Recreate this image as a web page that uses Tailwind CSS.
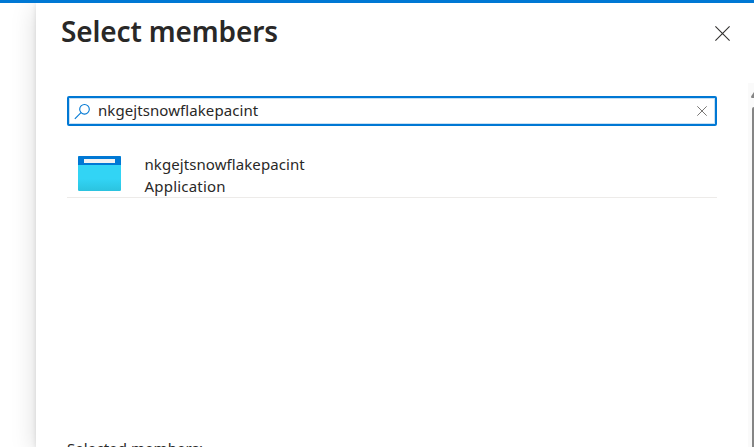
<!DOCTYPE html>
<html lang="en">
<head>
<meta charset="utf-8">
<title>Select members</title>
<script src="https://cdn.jsdelivr.net/npm/@tailwindcss/browser@4"></script>
</head>
<body class="h-[447px] w-[754px] overflow-hidden bg-white font-['Noto_Sans',sans-serif] text-[#292827]">
<div class="flex h-[447px] flex-col overflow-hidden">
  <div class="h-[3px] shrink-0 bg-[#0078d4]"></div>
  <div class="flex min-h-0 flex-1 overflow-hidden">
    <div class="w-9 shrink-0 bg-white"></div>
    <main class="flex min-w-0 flex-1 flex-col bg-white shadow-[0_5px_24px_rgba(0,0,0,0.15),0_1px_5px_rgba(0,0,0,0.1)]">
      <header class="flex h-20 shrink-0 items-start justify-between pl-[25px] pr-[24px]">
        <h1 class="mt-[8px] text-[28px] font-semibold leading-[40px] tracking-[-0.14px]">Select members</h1>
        <button aria-label="Close" class="mt-[23px]"><svg class="block" width="15" height="15" viewBox="0 0 15 15" fill="none" stroke="#323130" stroke-width="1.1"><path d="M.4.4 14.6 14.6M14.6.4.4 14.6"/></svg></button>
      </header>
      <div class="flex min-h-0 flex-1">
        <section class="flex w-[681px] shrink-0 flex-col pl-[31px] pt-[13px] text-[15px]">
          <div class="flex h-[30px] shrink-0 items-center rounded-[2px] border-2 border-[#0078d4] pl-[5px] pr-[8px] shadow-[inset_0_0_0_1px_#c7e0f4]">
            <svg class="shrink-0" width="17" height="17" viewBox="0 0 17 17" fill="none" stroke="#0078d4" stroke-width="1.1"><circle cx="10.5" cy="6.3" r="4.8"/><path d="M7 9.7.8 15.8"/></svg>
            <span class="ml-[7px] flex-1 pb-[2px] leading-5 tracking-[0.08px]">nkgejtsnowflakepacint</span>
            <svg width="10" height="10" viewBox="0 0 10 10" fill="none" stroke="#797775"><path d="M.3.3 9.7 9.7M9.7.3.3 9.7"/></svg>
          </div>
          <div class="flex h-[72px] shrink-0 border-b border-[#edebe9] pl-[11px] pt-[30px]">
            <svg class="shrink-0" width="43" height="35" viewBox="0 0 43 35">
              <defs><linearGradient id="g" x2="0" y2="1"><stop offset=".65" stop-color="#32d4f5"/><stop offset="1" stop-color="#2bc3df"/></linearGradient></defs>
              <rect width="43" height="35" rx="1.2" fill="url(#g)"/>
              <path d="M0 9V1.2Q0 0 1.2 0H41.8Q43 0 43 1.2V9Z" fill="#0078d4"/>
              <rect x="6" y="3" width="31" height="4" fill="#f2f2f2"/>
            </svg>
            <div class="ml-[23.5px] -mt-[3px] leading-[22px]">
              <div class="tracking-[0.08px]">nkgejtsnowflakepacint</div>
              <div class="tracking-[0.2px]">Application</div>
            </div>
          </div>
          <div class="mt-[239px] shrink-0 leading-[22px] tracking-[0.08px]">Selected members:</div>
        </section>
        <div class="ml-auto flex w-[6px] shrink-0 flex-col items-end overflow-hidden bg-[#fafafa]">
          <svg class="mt-[9px] shrink-0" width="3" height="6" viewBox="0 0 3 6"><path d="M3 0 0 4.5Q0 6 1 6H3Z" fill="#858585"/></svg>
          <div class="mt-[9px] w-[2px] flex-1 rounded-tl-[2px] bg-[#858585]"></div>
        </div>
      </div>
    </main>
  </div>
</div>
</body>
</html>
